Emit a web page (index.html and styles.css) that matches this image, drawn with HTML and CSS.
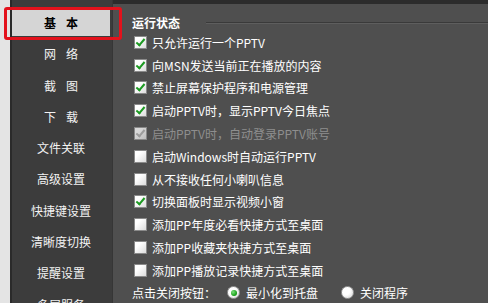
FILE: index.html
```html
<!DOCTYPE html>
<html lang="zh">
<head>
    <meta charset="UTF-8">
    <title>设置</title>
    <link rel="stylesheet" href="styles.css">
</head>
<body>
    <div class="window">
        <div class="edge"></div>

        <ul class="sidebar">
            <li class="item wide active">基本</li>
            <li class="item wide">网络</li>
            <li class="item wide">截图</li>
            <li class="item wide">下载</li>
            <li class="item">文件关联</li>
            <li class="item">高级设置</li>
            <li class="item">快捷键设置</li>
            <li class="item">清晰度切换</li>
            <li class="item">提醒设置</li>
            <li class="item">多屏服务</li>
        </ul>

        <div class="content">
            <div class="section-title">
                <span>运行状态</span>
                <span class="groove"></span>
            </div>

            <label class="row"><span class="cb checked"></span>只允许运行一个PPTV</label>
            <label class="row"><span class="cb checked"></span>向MSN发送当前正在播放的内容</label>
            <label class="row"><span class="cb checked"></span>禁止屏幕保护程序和电源管理</label>
            <label class="row"><span class="cb checked"></span>启动PPTV时，显示PPTV今日焦点</label>
            <label class="row disabled"><span class="cb checked"></span>启动PPTV时，自动登录PPTV账号</label>
            <label class="row"><span class="cb"></span>启动Windows时自动运行PPTV</label>
            <label class="row"><span class="cb"></span>从不接收任何小喇叭信息</label>
            <label class="row"><span class="cb checked"></span>切换面板时显示视频小窗</label>
            <label class="row"><span class="cb"></span>添加PP年度必看快捷方式至桌面</label>
            <label class="row"><span class="cb"></span>添加PP收藏夹快捷方式至桌面</label>
            <label class="row"><span class="cb"></span>添加PP播放记录快捷方式至桌面</label>

            <div class="radio-row">
                <span class="radio-label">点击关闭按钮：</span>
                <label class="radio"><span class="rb checked"></span>最小化到托盘</label>
                <label class="radio"><span class="rb"></span>关闭程序</label>
            </div>
        </div>
    </div>
</body>
</html>
```

FILE: styles.css
```css
body {
    margin: 0;
    background: #4f4f4f;
    font-family: "Noto Sans CJK SC", "Liberation Sans", sans-serif;
    font-size: 12px;
    color: #ffffff;
    overflow: hidden;
}

.window {
    display: flex;
    height: 303px;
}

/* 左侧窗口边 */
.edge {
    width: 10px;
    background: #e4e4e4;
    border-right: 2px solid #2a2a2a;
}

/* 侧边菜单 */
.sidebar {
    width: 100px;
    margin: 0;
    padding: 9px 0 0 0;
    list-style: none;
    background: #3c3c3c;
    border-right: 1px solid #363636;
    display: flex;
    flex-direction: column;
    gap: 4.3px;
}

.item {
    height: 27px;
    line-height: 27px;
    flex-shrink: 0;
    text-align: center;
    color: #f2f2f2;
    margin-right: 2px;
}

.item.wide {
    letter-spacing: 10px;
    padding-left: 10px;
}

.item.active {
    position: relative;
    background: #d5d5d5;
    color: #000000;
    font-weight: bold;
}

.item.active::after {
    content: '';
    position: absolute;
    left: -8px;
    right: -12px;
    top: -2px;
    bottom: -4px;
    border: 3px solid #e3121c;
    border-radius: 3px;
    z-index: 2;
}

/* 右侧内容 */
.content {
    flex: 1;
    border-top: 4px solid #2c2c2c;
    padding: 11px 0 0 19px;
}

.section-title {
    display: flex;
    align-items: center;
    gap: 26px;
    height: 16px;
    line-height: 16px;
    font-weight: bold;
}

.groove {
    flex: 1;
    border-top: 1px solid #3a3a3a;
    border-bottom: 1px solid #5e5e5e;
}

.row {
    display: flex;
    align-items: center;
    gap: 5px;
    height: 22.8px;
    padding-left: 2px;
    white-space: nowrap;
}

.row.disabled {
    color: #8e8e8e;
}

/* 复选框 */
.cb {
    position: relative;
    width: 11px;
    height: 11px;
    border: 1px solid #8a8a8a;
    background: linear-gradient(135deg, #ffffff 30%, #dcdcdc);
    flex-shrink: 0;
}

.cb.checked::after {
    content: '';
    position: absolute;
    left: 3px;
    top: 0;
    width: 3px;
    height: 7px;
    border-right: 2.5px solid #1c9a22;
    border-bottom: 2.5px solid #1c9a22;
    transform: rotate(40deg);
}

.row.disabled .cb {
    background: linear-gradient(135deg, #d8d8d8 30%, #bcbcbc);
    border-color: #888888;
}

.row.disabled .cb.checked::after {
    border-color: #9c9c9c;
}

/* 单选 */
.radio-row {
    display: flex;
    align-items: center;
    height: 20px;
    margin-top: 1px;
    white-space: nowrap;
}

.radio-label {
    margin-right: 11px;
}

.radio {
    display: flex;
    align-items: center;
    gap: 6px;
    margin-right: 23px;
}

.rb {
    position: relative;
    width: 11px;
    height: 11px;
    border-radius: 50%;
    border: 1px solid #9a9a9a;
    background: radial-gradient(circle at 35% 35%, #ffffff 40%, #cfcfcf);
    flex-shrink: 0;
}

.rb.checked::after {
    content: '';
    position: absolute;
    left: 2.5px;
    top: 2.5px;
    width: 6px;
    height: 6px;
    border-radius: 50%;
    background: radial-gradient(circle at 35% 35%, #7be07b, #109a10 70%);
}
```
